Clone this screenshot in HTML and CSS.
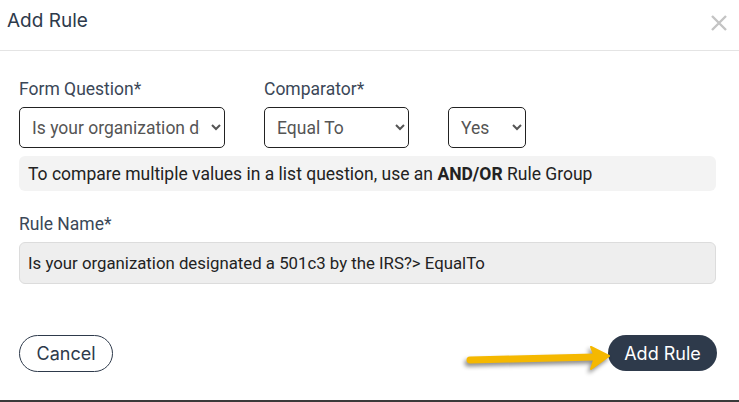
FILE: index.html
```html
<!DOCTYPE html>
<html>
<head>
  <title>Add Rule</title>
  <meta name="viewport" content="width=device-width, initial-scale=1">
  <link rel="stylesheet" href="styles.css">
</head>
<body>
  <div class="dialog">
    <div class="dialog-header">
      <h2>Add Rule</h2>
      <svg class="close" width="18" height="18" viewBox="0 0 18 18">
        <path d="M2 2 L16 16 M16 2 L2 16" stroke="#c4c4c4" stroke-width="2.4"/>
      </svg>
    </div>

    <div class="dialog-body">
      <div class="fields">
        <div class="field">
          <label>Form Question*</label>
          <select class="sel-question">
            <option>Is your organization designated a 501c3 by the IRS?</option>
          </select>
        </div>
        <div class="field">
          <label>Comparator*</label>
          <select class="sel-comparator">
            <option>Equal To</option>
          </select>
        </div>
        <div class="field">
          <select class="sel-value">
            <option>Yes</option>
          </select>
        </div>
      </div>

      <div class="note">To compare multiple values in a list question, use an <b>AND/OR</b> Rule Group</div>

      <label class="name-label">Rule Name*</label>
      <input class="rule-name" type="text" value="Is your organization designated a 501c3 by the IRS?> EqualTo" readonly>
    </div>

    <div class="dialog-footer">
      <button class="btn-cancel">Cancel</button>
      <svg class="arrow" width="150" height="30" viewBox="0 0 150 30">
        <line x1="6" y1="16" x2="131" y2="13" stroke="#f5b800" stroke-width="7" stroke-linecap="round"/>
        <polygon points="127,3 145,12 127,25 131,13" fill="#f5b800" stroke="#f5b800" stroke-width="2" stroke-linejoin="round"/>
      </svg>
      <button class="btn-add">Add Rule</button>
    </div>
  </div>
</body>
</html>
```

FILE: styles.css
```css
body {
  margin: 0;
  background: white;
  font-family: Roboto, 'Liberation Sans', sans-serif;
  color: #333;
}

.dialog {
  height: 400px;
  border-bottom: 2px solid #3a3a3a;
  display: flex;
  flex-direction: column;
}

.dialog-header {
  height: 50px;
  border-bottom: 1px solid #e4e4e4;
  display: flex;
  justify-content: space-between;
  align-items: center;
  padding: 0 11px 0 7px;
}

.dialog-header h2 {
  margin: 0 0 10px 0;
  font-family: Inter, sans-serif;
  font-weight: 400;
  font-size: 19px;
  color: #2e3a4b;
}

.close {
  margin-bottom: 5px;
}

.dialog-body {
  padding: 28px 23px 0 19px;
  display: flex;
  flex-direction: column;
}

.fields {
  display: flex;
  align-items: flex-end;
  gap: 39px;
}

.field {
  display: flex;
  flex-direction: column;
}

label {
  font-size: 17.5px;
  color: #3b4757;
  margin-bottom: 8px;
  line-height: 20px;
}

select {
  height: 41px;
  border: 1px solid #222;
  border-radius: 5px;
  background: white;
  font-family: Roboto, sans-serif;
  font-size: 17.5px;
  color: #555;
  padding: 0 8px;
}

.sel-question {
  width: 206px;
}

.sel-comparator {
  width: 145px;
}

.sel-value {
  width: 78px;
}

.note {
  margin-top: 8px;
  background: #f3f3f3;
  border-radius: 6px;
  height: 35px;
  padding: 0 9px;
  display: flex;
  align-items: center;
  font-size: 17.5px;
  color: #222;
  white-space: pre;
}

.name-label {
  margin-top: 23px;
}

.rule-name {
  height: 42px;
  box-sizing: border-box;
  border: 1px solid #dcdcdc;
  border-radius: 6px;
  background: #eeeeee;
  font-family: Roboto, sans-serif;
  font-size: 16.8px;
  color: #222;
  padding: 0 8px;
}

.dialog-footer {
  position: relative;
  display: flex;
  justify-content: space-between;
  align-items: flex-start;
  padding: 51px 22px 0 19px;
}

.dialog-footer button {
  font-family: Inter, sans-serif;
  font-size: 18px;
  border-radius: 20px;
  cursor: pointer;
}

.btn-cancel {
  width: 94px;
  height: 37px;
  background: white;
  border: 1px solid #2e3a4b;
  color: #2e3a4b;
}

.btn-add {
  width: 109px;
  height: 36px;
  background: #2e3a4b;
  border: none;
  color: white;
}

.arrow {
  position: absolute;
  left: 464px;
  top: 60px;
  filter: drop-shadow(-2px 3px 2px rgba(0, 0, 0, 0.45));
}
```
